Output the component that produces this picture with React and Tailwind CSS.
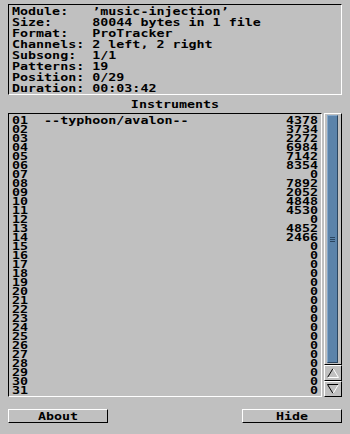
import React from "react";

const info = [
  ["Module:", "’music-injection’"],
  ["Size:", "80044 bytes in 1 file"],
  ["Format:", "ProTracker"],
  ["Channels:", "2 left, 2 right"],
  ["Subsong:", "1/1"],
  ["Patterns:", "19"],
  ["Position:", "0/29"],
  ["Duration:", "00:03:42"],
];

const sizes = [4378, 3734, 2272, 6984, 7142, 8354, 0, 7892, 2052, 4848, 4530, 0, 4852, 2466];
const rows = Array.from({ length: 31 }, (_, i) => ({
  num: String(i + 1).padStart(2, "0"),
  name: i === 0 ? "--typhoon/avalon--" : "",
  size: i < sizes.length ? sizes[i] : 0,
}));

function T({ children, className = "" }) {
  return (
    <div className={"h-[11px] leading-[11px] whitespace-pre scale-y-[0.72] " + className}>
      {children}
    </div>
  );
}

function UpArrow() {
  return (
    <svg width="12" height="10" viewBox="0 0 12 10" className="block">
      <path d="M6 0.5 L0.5 9.5" stroke="#000" strokeWidth="1" fill="none" />
      <path d="M6 0.5 L11.5 9.5 L0.5 9.5" stroke="#fff" strokeWidth="1" fill="none" />
    </svg>
  );
}

function DownArrow() {
  return (
    <svg width="12" height="10" viewBox="0 0 12 10" className="block">
      <path d="M0.5 0.5 L11.5 0.5 M0.5 0.5 L6 9.5" stroke="#000" strokeWidth="1" fill="none" />
      <path d="M11.5 0.5 L6 9.5" stroke="#fff" strokeWidth="1" fill="none" />
    </svg>
  );
}

export default function App() {
  return (
    <div className="w-[350px] h-[434px] bg-[#c0c0c0] font-['DejaVu_Sans_Mono',monospace] font-bold text-[13.33px] text-black pt-[4px] px-[8px]">
      {/* Info box */}
      <div className="h-[91px] border border-t-black border-l-black border-r-white border-b-white pl-[3px] pt-[1px]">
        {info.map(([k, v]) => (
          <T key={k}>
            {k.padEnd(10, " ")}
            {v}
          </T>
        ))}
      </div>

      <div className="mt-[4px] flex justify-center">
        <T>Instruments</T>
      </div>

      {/* List + scrollbar */}
      <div className="mt-[3px] flex gap-[2px] h-[284px]">
        <div className="w-[314px] border border-t-black border-l-black border-r-white border-b-white pt-[2px] pl-[3px] pr-[3px]">
          {rows.map((r) => (
            <div key={r.num} className="flex justify-between h-[9px] leading-[9px] scale-y-[0.72] whitespace-pre">
              <span>{r.num + "  " + r.name}</span>
              <span>{r.size}</span>
            </div>
          ))}
        </div>
        <div className="w-[18px] flex flex-col">
          <div className="flex-1 border border-t-white border-l-white border-r-black border-b-black pt-[1px] pb-[1px] pl-[2px] pr-[2px]">
            <div className="h-full w-[11px] bg-[#5b83aa] border border-t-[#86a8ca] border-l-[#86a8ca] border-r-[#2a4560] border-b-[#2a4560] flex flex-col items-center justify-center gap-[1px]">
              <div className="w-[5px] h-[1px] bg-[#2a4560]" />
              <div className="w-[5px] h-[1px] bg-[#2a4560]" />
              <div className="w-[5px] h-[1px] bg-[#2a4560]" />
            </div>
          </div>
          <div className="h-[16px] border border-t-white border-l-white border-r-black border-b-black flex items-center justify-center">
            <UpArrow />
          </div>
          <div className="h-[16px] border border-t-white border-l-white border-r-black border-b-black flex items-center justify-center">
            <DownArrow />
          </div>
        </div>
      </div>

      {/* Buttons */}
      <div className="mt-[12px] flex justify-between">
        <div className="w-[100px] h-[14px] border border-t-white border-l-white border-r-black border-b-black flex items-center justify-center">
          <T>About</T>
        </div>
        <div className="w-[100px] h-[14px] border border-t-white border-l-white border-r-black border-b-black flex items-center justify-center">
          <T>Hide</T>
        </div>
      </div>
    </div>
  );
}
